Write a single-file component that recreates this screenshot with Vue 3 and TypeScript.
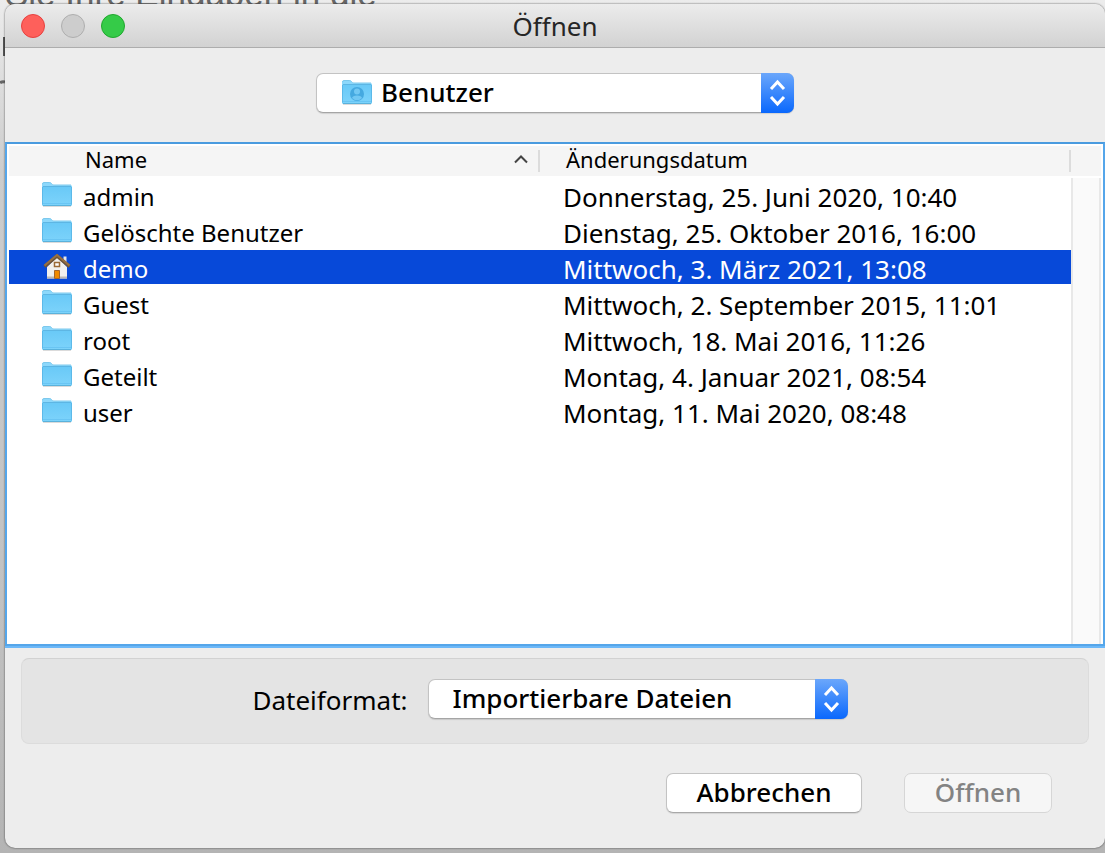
<script setup lang="ts">
import { computed, ref } from 'vue'

interface Entry {
  name: string
  date: string
  home?: boolean
}

const entries: Entry[] = [
  { name: 'admin', date: 'Donnerstag, 25. Juni 2020, 10:40' },
  { name: 'Gelöschte Benutzer', date: 'Dienstag, 25. Oktober 2016, 16:00' },
  { name: 'demo', date: 'Mittwoch, 3. März 2021, 13:08', home: true },
  { name: 'Guest', date: 'Mittwoch, 2. September 2015, 11:01' },
  { name: 'root', date: 'Mittwoch, 18. Mai 2016, 11:26' },
  { name: 'Geteilt', date: 'Montag, 4. Januar 2021, 08:54' },
  { name: 'user', date: 'Montag, 11. Mai 2020, 08:48' },
]

const selected = ref('demo')
const ascending = ref(true)
const place = ref('Benutzer')
const format = ref('Importierbare Dateien')
const rows = computed(() => (ascending.value ? entries : [...entries].reverse()))
</script>

<template>
  <div class="desktop">
    <div class="behind" aria-hidden="true">
      <span class="behind-text">Sie Ihre Eingaben in die</span>
      <svg class="behind-marks" width="5" height="60" viewBox="0 0 5 60">
        <path d="M4 3v19" stroke="#555" stroke-width="2" />
        <path d="M0 49q2-2 5-1" stroke="#666" stroke-width="3" fill="none" />
      </svg>
    </div>

    <svg class="defs" width="0" height="0" aria-hidden="true">
      <defs>
        <linearGradient id="folder-front" x1="0" y1="0" x2="0" y2="1">
          <stop offset="0" stop-color="#69c9f7" />
          <stop offset="1" stop-color="#7dd3fb" />
        </linearGradient>
        <symbol id="folder" viewBox="0 0 30 26">
          <path d="M1 24.500h28" stroke="#000" stroke-opacity=".14" />
          <path d="M0 2.200Q0 .500 1.700.500h6.100q1 0 1.800 1.200T11.800 3H28.500Q30 3 30 4.500V20H0Z" fill="#8dd8fb" />
          <path d="M.5 2.200Q.5.500 2 .500h5.800q1 0 1.800 1.200T11.800 3H29" fill="none" stroke="#7cc8ec" />
          <path d="M0 5.200Q0 4.500 1 4.500H29Q30 4.500 30 5.200V22.500Q30 24 28.500 24h-27Q0 24 0 22.500Z" fill="url(#folder-front)" />
          <path d="M1 4.500h28" stroke="#5db6e4" />
          <path d="M.5 5v17.500M29.500 5v17.500" stroke="#52b1e3" stroke-opacity=".7" />
          <path d="M1 21.500h28" stroke="#54b5ea" stroke-opacity=".45" />
          <path d="M1 23.500h28" stroke="#5ab2dc" />
        </symbol>
      </defs>
    </svg>

    <main class="window">
      <header class="titlebar">
        <div class="lights">
          <button class="light close" aria-label="Schließen"></button>
          <button class="light minimize" aria-label="Im Dock ablegen" disabled></button>
          <button class="light zoom" aria-label="Zoomen"></button>
        </div>
        <h1 class="title">Öffnen</h1>
      </header>

      <div class="location">
        <div class="popup place">
          <svg class="place-icon" width="30" height="26" aria-hidden="true">
            <use href="#folder" />
            <circle cx="15" cy="14" r="7" fill="#45a9e0" />
            <circle cx="15" cy="11.500" r="3" fill="#72c8f3" />
            <path d="M10 18q.5-2.500 5-2.500t5 2.500q-2 2.200-5 2.200T10 18Z" fill="#72c8f3" />
          </svg>
          <select v-model="place" aria-label="Ordner">
            <option>Benutzer</option>
          </select>
          <span class="stepper" aria-hidden="true">
            <svg width="33" height="40" viewBox="0 0 33 40">
              <path d="M10 16l6.500-7 6.500 7M10 24l6.500 7 6.500-7" />
            </svg>
          </span>
        </div>
      </div>

      <section class="list">
        <table>
          <colgroup>
            <col />
            <col />
            <col class="col-end" />
          </colgroup>
          <thead>
            <tr>
              <th class="name-head">
                <button class="sort" @click="ascending = !ascending">
                  <span>Name</span>
                  <svg :class="{ flipped: !ascending }" width="14" height="10" viewBox="0 0 14 10" aria-hidden="true">
                    <path d="M1 8.500l6-6 6 6" />
                  </svg>
                </button>
              </th>
              <th class="date-head">Änderungsdatum</th>
              <th></th>
            </tr>
          </thead>
          <tbody>
            <tr
              v-for="entry in rows"
              :key="entry.name"
              :class="{ selected: entry.name === selected }"
              @click="selected = entry.name"
            >
              <td>
                <div class="name-cell">
                  <svg v-if="entry.home" class="icon" width="30" height="26" viewBox="0 0 30 26" aria-hidden="true">
                    <path d="M21.500 2.500h3v7h-3z" fill="#e8e8e8" />
                    <path d="M5 13L15 3l10 10v11.500H5Z" fill="#f1f0ee" />
                    <path d="M5 23.500h20" stroke="#bcb9b4" stroke-width="2" />
                    <path d="M2.500 12.500L15 2l12.500 10.500" fill="none" stroke="#6e5436" stroke-width="3.500" />
                    <path d="M2.500 11.500L15 1l12.500 10.500" fill="none" stroke="#967045" stroke-width="2" />
                    <path d="M12.500 8.500h5v4h-5z" fill="#fff" stroke="#9b6a35" stroke-width="1.500" />
                    <path d="M12.500 16.500h5v8h-5z" fill="#f18a00" stroke="#a5662b" />
                  </svg>
                  <svg v-else class="icon" width="30" height="26" aria-hidden="true"><use href="#folder" /></svg>
                  <span>{{ entry.name }}</span>
                </div>
              </td>
              <td class="date">{{ entry.date }}</td>
              <td class="end"></td>
            </tr>
          </tbody>
        </table>
        <div class="track" aria-hidden="true"></div>
      </section>

      <section class="options">
        <label for="format">Dateiformat:</label>
        <div class="popup format">
          <select id="format" v-model="format">
            <option>Importierbare Dateien</option>
          </select>
          <span class="stepper" aria-hidden="true">
            <svg width="33" height="40" viewBox="0 0 33 40">
              <path d="M10 16l6.500-7 6.500 7M10 24l6.500 7 6.500-7" />
            </svg>
          </span>
        </div>
      </section>

      <footer class="actions">
        <button class="push cancel">Abbrechen</button>
        <button class="push open" disabled>Öffnen</button>
      </footer>
    </main>
  </div>
</template>

<style>
body {
  margin: 0;
}
</style>

<style scoped>
.desktop {
  position: relative;
  display: flex;
  box-sizing: border-box;
  min-height: 100vh;
  padding: 4px 0 5px 5px;
  overflow: hidden;
  background: linear-gradient(#ececec, #cdcdcd 20%, #c2c2c2 70%, #b4b4b4);
  color: #000;
  font-family: "Noto Sans", "Open Sans", sans-serif;
  font-size: 24px;
}
.behind-text {
  position: absolute;
  top: -24px;
  left: 5px;
  color: #666;
  font: 35px/36px "Liberation Sans", Arial, sans-serif;
  white-space: nowrap;
}
.behind-marks {
  position: absolute;
  top: 34px;
  left: 0;
}
.defs {
  position: absolute;
}
.window {
  position: relative;
  display: flex;
  flex: 1;
  flex-direction: column;
  min-width: 0;
  overflow: hidden;
  border-radius: 10px;
  background: #ededed;
  box-shadow: 0 0 2px rgba(0, 0, 0, 0.7);
}
.titlebar {
  position: relative;
  display: flex;
  align-items: center;
  justify-content: center;
  box-sizing: border-box;
  height: 44px;
  border-bottom: 1px solid #adadad;
  background: linear-gradient(#ececec, #d2d2d2);
}
.lights {
  position: absolute;
  left: 16px;
  display: flex;
  gap: 16px;
}
.light {
  box-sizing: border-box;
  width: 24px;
  height: 24px;
  padding: 0;
  border: 1px solid #e6413f;
  border-radius: 50%;
  background: #fe605b;
}
.minimize {
  border-color: #aeaeae;
  background: #cdcdcd;
}
.zoom {
  border-color: #20a72e;
  background: #35cb48;
}
.title {
  margin: 0;
  color: #262626;
  font-size: 26px;
  font-weight: 400;
  line-height: 36px;
}
.location {
  display: flex;
  justify-content: center;
  padding: 25px 16px 29px;
}
.popup {
  position: relative;
  height: 40px;
}
.popup select {
  box-sizing: border-box;
  width: 100%;
  height: 40px;
  padding: 0 40px 2px 24px;
  border: 1px solid #c3c3c3;
  border-bottom-color: #a5a5a5;
  border-radius: 7px;
  outline: none;
  appearance: none;
  background: #fff;
  box-shadow: 0 1px 1px rgba(0, 0, 0, 0.12);
  color: #000;
  font: inherit;
  font-size: 26px;
  font-weight: 500;
}
.place {
  width: 478px;
}
.popup.place select {
  padding-left: 64px;
}
.place-icon {
  position: absolute;
  top: 7px;
  left: 26px;
  z-index: 1;
  pointer-events: none;
}
.stepper {
  position: absolute;
  top: 0;
  right: 0;
  width: 33px;
  height: 40px;
  border-radius: 0 7px 7px 0;
  background: linear-gradient(#6ba7fb, #0a68fd);
  pointer-events: none;
}
.stepper path {
  fill: none;
  stroke: #fff;
  stroke-width: 3;
}
.list {
  position: relative;
  flex: 1;
  padding: 2px;
  border: 2px solid #55a6ea;
  border-top-color: #4a9bdf;
  background: #fff;
  box-shadow: 0 2px #6cb8f8;
}
table {
  width: 100%;
  border-collapse: collapse;
  table-layout: fixed;
}
.col-end {
  width: 30px;
}
th {
  position: relative;
  height: 30px;
  padding: 0;
  background: #f5f5f5;
  font-size: 22px;
  font-weight: 400;
  line-height: 26px;
  text-align: left;
  vertical-align: top;
}
th:not(:last-child)::after {
  position: absolute;
  top: 4px;
  right: 0;
  width: 2px;
  height: 22px;
  background: #dcdcdc;
  content: "";
}
.sort {
  display: flex;
  align-items: center;
  justify-content: space-between;
  width: 100%;
  height: 26px;
  padding: 0 12px 0 76px;
  border: 0;
  background: none;
  color: inherit;
  font: inherit;
}
.sort path {
  fill: none;
  stroke: #444;
  stroke-width: 2;
}
.flipped {
  transform: rotate(180deg);
}
.date-head {
  padding-left: 26px;
}
td {
  height: 30px;
  padding: 4px 0 0;
  border-top: 2px solid #fff;
  background-clip: padding-box;
  line-height: 30px;
  white-space: nowrap;
}
.name-cell {
  display: flex;
  gap: 11px;
  height: 30px;
  padding-left: 33px;
}
.date {
  padding-left: 23px;
  font-size: 26px;
}
.selected td:not(.end) {
  background-color: #0749d9;
  color: #fff;
}
.track {
  position: absolute;
  top: 34px;
  right: 2px;
  bottom: 0;
  box-sizing: border-box;
  width: 30px;
  border: solid #e8e8e8;
  border-width: 0 2px;
  background: #fafafa;
}
.options {
  display: flex;
  align-items: center;
  justify-content: center;
  gap: 20px;
  box-sizing: border-box;
  height: 86px;
  margin: 12px 16px 0;
  padding: 0 10px 4px 0;
  border: 1px solid #dcdcdc;
  border-top-color: #d2d2d2;
  border-radius: 8px;
  background: #e4e4e4;
  font-size: 26px;
}
.options label {
  padding-top: 2px;
}
.format {
  width: 420px;
}
.actions {
  display: flex;
  justify-content: flex-end;
  gap: 42px;
  padding: 29px 53px 35px 16px;
}
.push {
  box-sizing: border-box;
  height: 40px;
  padding: 0 0 2px;
  border: 1px solid #c3c3c3;
  border-bottom-color: #a8a8a8;
  border-radius: 7px;
  background: #fff;
  box-shadow: 0 1px 1px rgba(0, 0, 0, 0.1);
  color: #000;
  font: inherit;
  font-size: 26px;
  font-weight: 500;
  line-height: 36px;
}
.cancel {
  width: 196px;
}
.open {
  width: 148px;
  border-color: #d6d6d6;
  background: #f6f6f6;
  box-shadow: none;
  color: #838383;
}
</style>
